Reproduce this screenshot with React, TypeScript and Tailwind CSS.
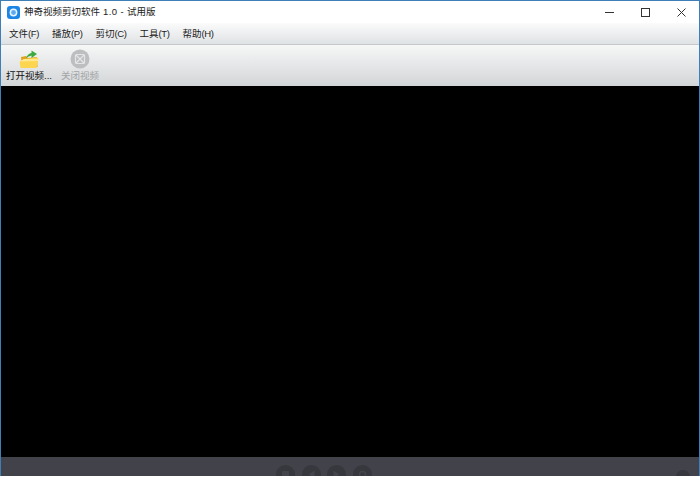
import React from 'react';

const menus = [
  ['文件', '(F)'],
  ['播放', '(P)'],
  ['剪切', '(C)'],
  ['工具', '(T)'],
  ['帮助', '(H)'],
];

function AppIcon() {
  return (
    <svg width="13" height="13" viewBox="0 0 13 13">
      <rect width="13" height="13" rx="3" fill="#1b86e6" />
      <circle cx="6.5" cy="6.5" r="3.9" fill="#e9f4fd" />
      <circle cx="6.5" cy="6.5" r="2.4" fill="#5eaaf0" />
    </svg>
  );
}

function FolderIcon() {
  return (
    <svg width="20" height="20" viewBox="0 0 20 20">
      <path d="M2 8 L7 7 L9 9 L18 8 L18.5 18 L3 19 Z" fill="#dca31f" />
      <path d="M7 9 Q9 4.5 12.5 4 L12.5 1.5 L18 5 L12.5 9 L12.5 6.5 Q9.5 7 7 9 Z" fill="#3cab3f" />
      <path d="M5 10 L14 9 L18 8.5 L19.5 10 L17.5 18.5 Q17.3 19 16.5 19 L2.5 19 Q1.5 19 1.4 18 L0.6 12.5 Z" fill="#fdd54e" />
      <path d="M0.6 12.5 L5 10 L19.5 10 L19 12 Z" fill="#ffe88f" />
    </svg>
  );
}

function CloseVideoIcon() {
  return (
    <svg width="20" height="20" viewBox="0 0 20 20">
      <circle cx="10" cy="10" r="9.5" fill="#bdbebf" />
      <rect x="5.5" y="5.5" width="9" height="9" rx="1" fill="none" stroke="#e4e5e6" strokeWidth="1.2" />
      <path d="M6 6 L14 14 M14 6 L6 14" stroke="#e4e5e6" strokeWidth="1.2" />
    </svg>
  );
}

function RoundButton({ children }: { children: React.ReactNode }) {
  return (
    <div className="flex h-[19px] w-[19px] shrink-0 items-start justify-center rounded-full bg-[#37383e] pt-[5px]">
      <svg width="9" height="9" viewBox="0 0 9 9">
        {children}
      </svg>
    </div>
  );
}

export default function App() {
  return (
    <div className="h-[495px] w-[700px] bg-white font-['Liberation_Sans','Noto_Sans_CJK_SC',sans-serif]">
      <div className="flex h-[476px] flex-col border-x border-t border-[#3f7fb8]">
        {/* Title bar */}
        <div className="flex h-[22px] items-center bg-white pl-[6px]">
          <AppIcon />
          <span className="ml-[4px] text-[9.5px] text-[#222222]">
            神奇视频剪切软件<span className="tracking-[0.4px]"> 1.0 - </span>试用版
          </span>
          <div className="ml-auto flex items-center">
            <div className="flex h-[22px] w-[36px] items-center justify-center">
              <div className="h-px w-[9px] bg-[#333333]" />
            </div>
            <div className="flex h-[22px] w-[36px] items-center justify-center">
              <div className="h-[9px] w-[9px] border border-[#333333]" />
            </div>
            <div className="flex h-[22px] w-[36px] items-center justify-center">
              <svg width="9" height="9" viewBox="0 0 9 9">
                <path d="M0.5 0.5 L8.5 8.5 M8.5 0.5 L0.5 8.5" stroke="#333333" strokeWidth="1" />
              </svg>
            </div>
          </div>
        </div>

        {/* Menu bar */}
        <div className="flex h-[22px] items-center gap-[13px] border-b border-[#c4c8cb] bg-gradient-to-b from-[#fbfbfb] to-[#dfe2e4] pl-[8px] pt-[2px]">
          {menus.map(([label, key]) => (
            <span key={key} className="text-[9.5px] text-[#222222]">
              {label}
              <span className="tracking-[-0.4px]">{key}</span>
            </span>
          ))}
        </div>

        {/* Toolbar */}
        <div className="flex h-[41px] gap-[9px] bg-gradient-to-b from-[#f6f7f7] to-[#d3d6d8] pl-[5px]">
          <div className="flex flex-col items-center pt-[4px]">
            <FolderIcon />
            <span className="text-[9.5px] leading-[13px] text-[#111111]">打开视频...</span>
          </div>
          <div className="flex flex-col items-center pt-[4px]">
            <CloseVideoIcon />
            <span className="text-[9.5px] leading-[13px] text-[#a2a4a6]">关闭视频</span>
          </div>
        </div>

        {/* Video area */}
        <div className="flex-1 bg-black" />

        {/* Controls, cut off by the bottom edge */}
        <div className="flex h-[19px] items-start gap-[6.5px] overflow-hidden bg-[#41424a] pl-[275px] pt-[8px]">
          <RoundButton>
            <rect x="1" y="1" width="7" height="7" rx="1" fill="#44454c" />
          </RoundButton>
          <RoundButton>
            <path d="M7.5 0.5 L1.5 4.5 L7.5 8.5 Z" fill="#44454c" />
          </RoundButton>
          <RoundButton>
            <path d="M1.5 0.5 L7.5 4.5 L1.5 8.5 Z" fill="#44454c" />
          </RoundButton>
          <RoundButton>
            <circle cx="4.5" cy="4.5" r="3" fill="none" stroke="#44454c" strokeWidth="1.5" />
          </RoundButton>
          <div className="ml-auto mr-[9px] mt-[5px] h-[14px] w-[14px] shrink-0 rounded-full bg-[#37383e]" />
        </div>
      </div>
    </div>
  );
}
